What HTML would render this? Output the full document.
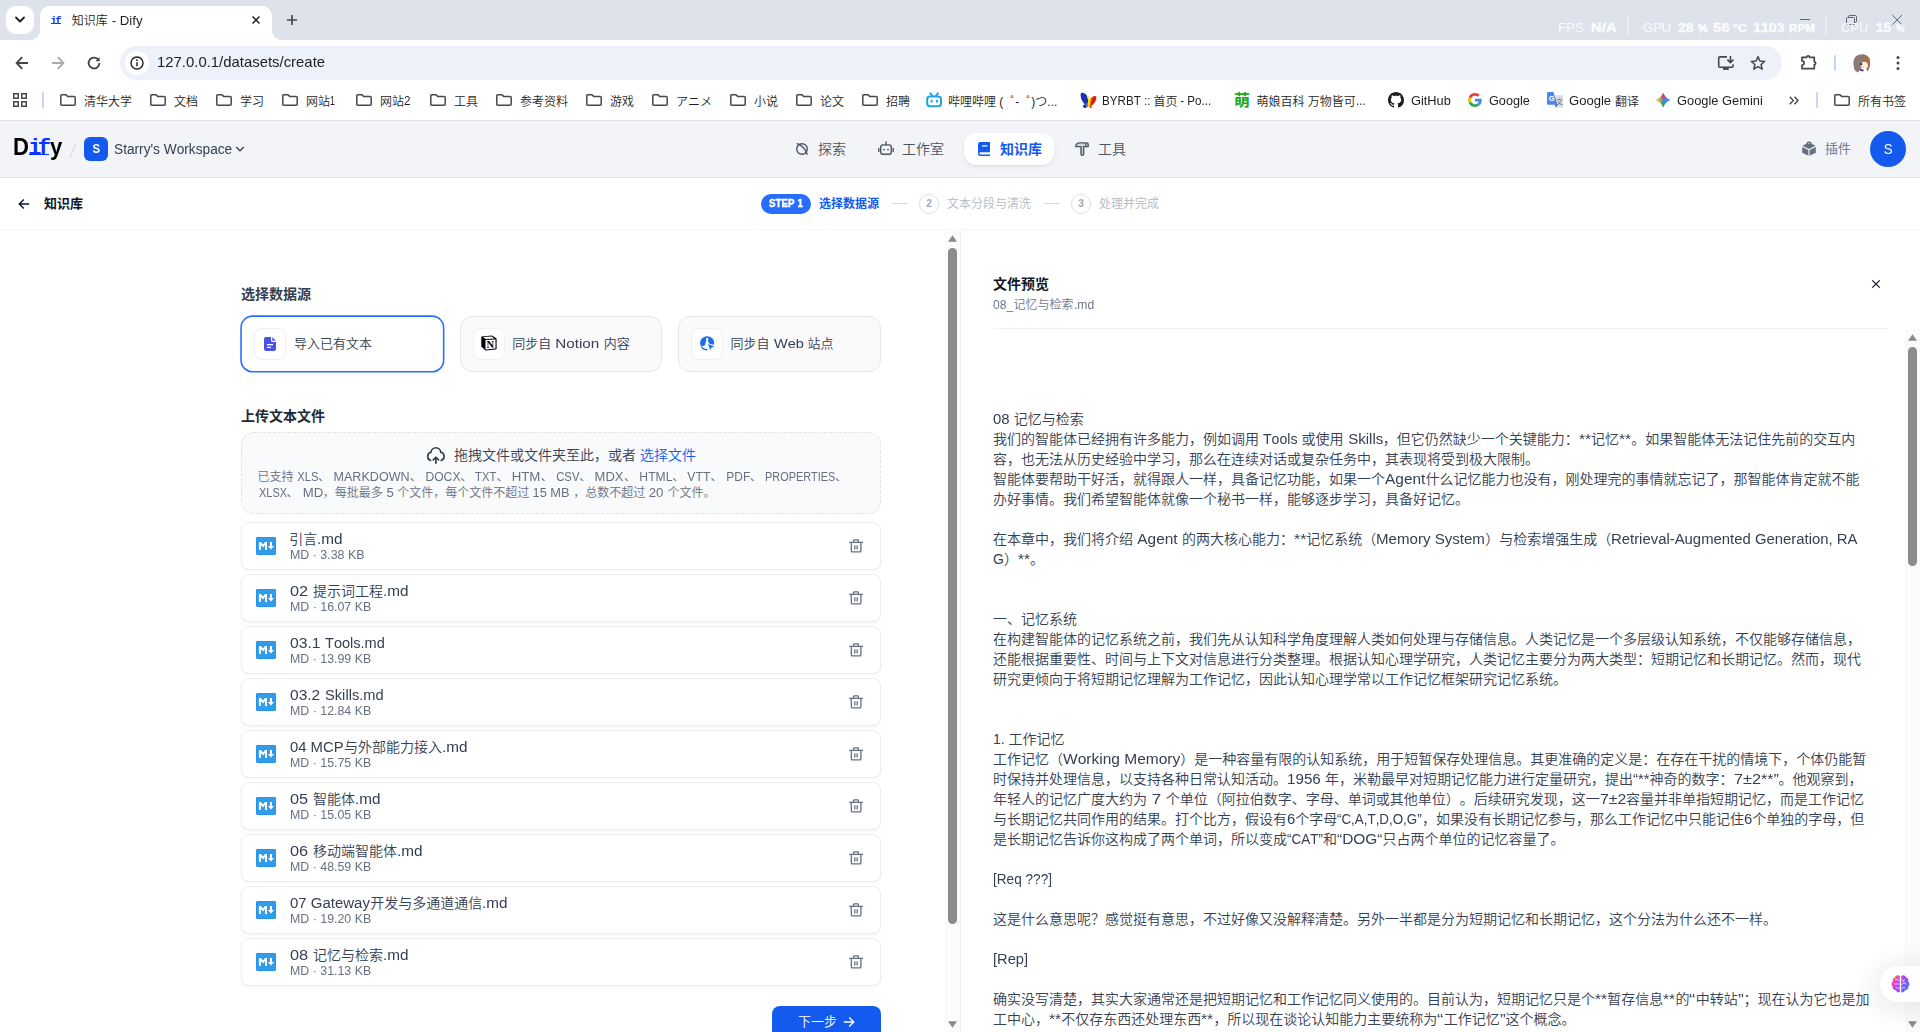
<!DOCTYPE html>
<html lang="zh-CN"><head><meta charset="utf-8"><title>知识库 - Dify</title>
<style>
*{box-sizing:border-box;margin:0;padding:0}
html,body{width:1920px;height:1032px;overflow:hidden;background:#fff}
body{font-family:"Liberation Sans","Noto Sans CJK SC",sans-serif;position:relative;color:#1f1f1f;font-weight:350;text-spacing-trim:space-all;font-kerning:none}
.a{position:absolute;white-space:nowrap}
.t{white-space:pre}
.l{display:inline-block;white-space:pre}
.l>span{display:inline-block;white-space:pre;transform-origin:0 50%}
svg{position:absolute;overflow:visible}
#strip{left:0;top:0;width:1920px;height:40px;background:#dee2ea}
#tabbtn{left:6px;top:6px;width:28px;height:28px;border-radius:10px;background:#fff}
#tab{left:40px;top:6px;width:232px;height:34px;border-radius:10px 10px 0 0;background:#fff}
#tabL{left:30px;top:30px;width:10px;height:10px;background:radial-gradient(circle at 0 0,transparent 9.7px,#fff 10.3px)}
#tabR{left:272px;top:30px;width:10px;height:10px;background:radial-gradient(circle at 100% 0,transparent 9.7px,#fff 10.3px)}
#toolbar{left:0;top:40px;width:1920px;height:80px;background:#fff;border-radius:7px 7px 0 0}
#url{left:120px;top:46px;width:1662px;height:34px;border-radius:17px;background:#edf1fa}
#urlic{left:125px;top:51px;width:24px;height:24px;border-radius:12px;background:#fff}
.bk{font-size:12px;color:#1f1f1f}
.bk .l{position:relative;top:-1px}
.hd{display:inline-block;width:12px;position:relative;left:7px}
.ov{font-size:13.5px;color:#fafbfd}
.ovb{font-weight:700;-webkit-text-stroke:.45px #fafbfd}
.ov b{font-weight:700}
.u{font-size:10px;font-weight:700}
#hdr{left:0;top:120px;width:1920px;height:58px;background:#f2f4f8;border-top:1px solid #e1e3e1;border-bottom:1px solid #dfe2e9}
#sub{left:0;top:178px;width:1920px;height:52px;background:#fff;border-bottom:1px solid #f5f6f8}
.nav{font-size:14px;color:#495464}
.pl{font-size:14px;color:#354052;font-weight:350}
.fn{font-size:14px;color:#354052}
.fm{font-size:12px;color:#676f83}
</style></head>
<body>
<div class="a" id="strip"></div>
<div class="a" id="tabbtn"></div>
<svg style="left:14px;top:16px" width="12" height="8" viewBox="0 0 12 8"><path d="M2 1.5 L6 5.5 L10 1.5" fill="none" stroke="#1f1f1f" stroke-width="1.8" stroke-linecap="round" stroke-linejoin="round"/></svg>
<div class="a" id="tab"></div><div class="a" id="tabL"></div><div class="a" id="tabR"></div>
<div class="a" style="left:50.5px;top:14px;font:bold 10.5px/14px 'Liberation Mono',monospace;color:#1433ff;letter-spacing:-1.6px">if</div>
<div class="a" style="left:51px;top:23.2px;width:9.6px;height:1.1px;background:#1433ff"></div>
<div class="a t" id="tabt" style="left:71.70px;top:12px;height:18px;line-height:18px;font-size:12px;color:#1f1f1f">知识库<span class="l" style="width:34.64px"><span style="transform:scaleX(1.1053)"> - Dify</span></span></div>
<svg style="left:252px;top:16px" width="8" height="8" viewBox="0 0 8 8"><path d="M0.5 0.5 L7.5 7.5 M7.5 0.5 L0.5 7.5" stroke="#1f1f1f" stroke-width="1.5" fill="none"/></svg>
<svg style="left:286px;top:14px" width="12" height="12" viewBox="0 0 12 12"><path d="M6 1 V11 M1 6 H11" stroke="#474747" stroke-width="1.7" fill="none"/></svg>
<svg style="left:1800px;top:14px" width="110" height="12" viewBox="0 0 110 12"><path d="M0 5.5 H10" stroke="#60646b" stroke-width="1" fill="none"/><rect x="46.5" y="3.5" width="8" height="7" rx="1.2" stroke="#60646b" stroke-width="1" fill="none"/><path d="M48.5 3.2 V2.7 Q48.5 1.5 49.7 1.5 H55.3 Q56.5 1.5 56.5 2.7 V7.3 Q56.5 8.5 55.3 8.5 H54.8" stroke="#60646b" stroke-width="1" fill="none"/><path d="M92.3 1 L102 10.7 M102 1 L92.3 10.7" stroke="#60646b" stroke-width="1" fill="none"/></svg>
<div class="a t ov" id="ov1" style="left:1557.70px;top:18px;height:20px;line-height:20px;"><span class="l" style="width:26.07px"><span style="transform:scaleX(0.9924)">FPS</span></span></div>
<div class="a t ov ovb" id="ov2" style="left:1590.60px;top:18px;height:20px;line-height:20px;"><span class="l" style="width:25.65px"><span style="transform:scaleX(1.1032)">N/A</span></span></div>
<div class="a" style="left:1627.3px;top:15px;width:1.6px;height:20px;background:#eceef3"></div>
<div class="a t ov" id="ov3" style="left:1643.30px;top:18px;height:20px;line-height:20px;"><span class="l" style="width:28.27px"><span style="transform:scaleX(0.9658)">GPU</span></span></div>
<div class="a t ov ovb" id="ov4" style="left:1678.00px;top:18px;height:20px;line-height:20px;"><span class="l" style="width:15.63px"><span style="transform:scaleX(1.0399)">28</span></span></div>
<div class="a t ov u ovb" id="ov4u" style="left:1697.50px;top:19px;height:20px;line-height:20px;"><span class="l" style="width:10.01px"><span style="transform:scaleX(1.1235)">%</span></span></div>
<div class="a t ov ovb" id="ov5" style="left:1712.90px;top:18px;height:20px;line-height:20px;"><span class="l" style="width:16.83px"><span style="transform:scaleX(1.1198)">56</span></span></div>
<div class="a t ov u ovb" id="ov5u" style="left:1732.50px;top:19px;height:20px;line-height:20px;"><span class="l" style="width:13.73px"><span style="transform:scaleX(1.2225)">°C</span></span></div>
<div class="a t ov ovb" id="ov6" style="left:1753.30px;top:18px;height:20px;line-height:20px;"><span class="l" style="width:31.75px"><span style="transform:scaleX(1.0566)">1103</span></span></div>
<div class="a t ov u ovb" id="ov6u" style="left:1789.40px;top:19px;height:20px;line-height:20px;"><span class="l" style="width:25.93px"><span style="transform:scaleX(1.1664)">RPM</span></span></div>
<div class="a" style="left:1825.2px;top:15px;width:1.6px;height:20px;background:#eceef3"></div>
<div class="a t ov" id="ov7" style="left:1841.40px;top:18px;height:20px;line-height:20px;"><span class="l" style="width:27.22px"><span style="transform:scaleX(0.9544)">CPU</span></span></div>
<div class="a t ov ovb" id="ov8" style="left:1876.00px;top:18px;height:20px;line-height:20px;"><span class="l" style="width:14.93px"><span style="transform:scaleX(0.9933)">15</span></span></div>
<div class="a t ov u ovb" id="ov8u" style="left:1896.30px;top:19px;height:20px;line-height:20px;"><span class="l" style="width:8.61px"><span style="transform:scaleX(0.9663)">%</span></span></div>
<div class="a" id="toolbar"></div>
<svg style="left:15px;top:56px" width="14" height="14" viewBox="0 0 14 14"><path d="M13 7 H2 M7.2 1.2 L1.6 7 L7.2 12.8" fill="none" stroke="#434343" stroke-width="1.8" stroke-linejoin="miter"/></svg>
<svg style="left:51px;top:56px" width="14" height="14" viewBox="0 0 14 14"><path d="M1 7 H12 M6.8 1.2 L12.4 7 L6.8 12.8" fill="none" stroke="#ababab" stroke-width="1.8"/></svg>
<svg style="left:87px;top:56px" width="14" height="14" viewBox="0 0 14 14"><path d="M11.6 4.2 A5.4 5.4 0 1 0 12.4 7" fill="none" stroke="#434343" stroke-width="1.8"/><path d="M12.6 1 V5.2 H8.4 Z" fill="#474747"/></svg>
<div class="a" id="url"></div><div class="a" id="urlic"></div>
<svg style="left:130px;top:56px" width="14" height="14" viewBox="0 0 14 14"><circle cx="7" cy="7" r="6" fill="none" stroke="#1f1f1f" stroke-width="1.4"/><path d="M7 6.3 V10.2" stroke="#1f1f1f" stroke-width="1.5"/><circle cx="7" cy="4.2" r="0.9" fill="#1f1f1f"/></svg>
<div class="a t" id="urlt" style="left:157.30px;top:52px;height:20px;line-height:20px;font-size:14.5px;color:#1f1f1f"><span class="l" style="width:168.06px"><span style="transform:scaleX(1.0269)">127.0.0.1/datasets/create</span></span></div>
<svg style="left:1717px;top:55px" width="18" height="16" viewBox="0 0 18 16"><path d="M10 1.9 H3 Q1.7 1.9 1.7 3.2 V11 Q1.7 12.3 3 12.3 H14.8 Q16.1 12.3 16.1 11 V9.2" fill="none" stroke="#474747" stroke-width="1.6"/><path d="M6 13.9 H11.8" stroke="#474747" stroke-width="2"/><path d="M13.4 1 V7.4 M10.4 4.6 L13.4 7.6 L16.4 4.6" fill="none" stroke="#474747" stroke-width="1.6"/></svg>
<svg style="left:1750px;top:55px" width="16" height="16" viewBox="0 0 16 16"><path d="M8 1.6 L9.9 6 L14.7 6.4 L11.1 9.5 L12.2 14.2 L8 11.7 L3.8 14.2 L4.9 9.5 L1.3 6.4 L6.1 6 Z" fill="none" stroke="#474747" stroke-width="1.5" stroke-linejoin="round"/></svg>
<svg style="left:1800px;top:54px" width="18" height="17" viewBox="0 0 18 17"><path d="M2 3.3 H6.7 A1.4 1.4 0 0 1 9.5 3.3 H14.3 V7.8 A1.4 1.4 0 0 1 14.3 10.6 V14.7 H2 V11.1 A2.1 2.1 0 0 0 2 6.9 Z" fill="none" stroke="#474747" stroke-width="1.7" stroke-linejoin="round"/></svg>
<div class="a" style="left:1833.8px;top:55px;width:2.2px;height:16px;background:#c5d7f6;border-radius:1px"></div>
<svg style="left:1852px;top:53px" width="20" height="21" viewBox="0 0 20 21"><defs><filter id="bl" x="-20%" y="-20%" width="140%" height="140%"><feGaussianBlur stdDeviation="0.55"/></filter><clipPath id="cp"><circle cx="10" cy="10.5" r="10"/></clipPath></defs><g clip-path="url(#cp)" filter="url(#bl)"><path d="M2 14 C0 6 4 1 9 1.5 C13 0.5 17 3 18 7 C18.5 11 17.5 15 16 18 L12 14 L8 16 L6 20 C3 19 2 17 2 14Z" fill="#8c7a74"/><path d="M11 4 C15 2 18.5 5 18 9 C18 13 17 16 15.5 18.5 L14 13 C13 9 12 7 11 4Z" fill="#b16a48"/><ellipse cx="12.3" cy="12.6" rx="3.6" ry="3.8" fill="#fcf1d9"/><ellipse cx="9.3" cy="11.2" rx="0.9" ry="1.1" fill="#2a1a1a"/><ellipse cx="10.5" cy="13.8" rx="1.2" ry="0.8" fill="#f5b8b0"/><path d="M8 15.5 L12 17 L11 18.5 L7.5 17.5Z" fill="#4a3a8a"/></g></svg>
<svg style="left:1896px;top:55px" width="4" height="16" viewBox="0 0 4 16"><circle cx="2" cy="2.5" r="1.5" fill="#474747"/><circle cx="2" cy="8" r="1.5" fill="#474747"/><circle cx="2" cy="13.5" r="1.5" fill="#474747"/></svg>
<svg style="left:13px;top:93px" width="14" height="14" viewBox="0 0 14 14"><g fill="none" stroke="#474747" stroke-width="1.5"><rect x="0.75" y="0.75" width="4.5" height="4.5"/><rect x="8.75" y="0.75" width="4.5" height="4.5"/><rect x="0.75" y="8.75" width="4.5" height="4.5"/><rect x="8.75" y="8.75" width="4.5" height="4.5"/></g></svg>
<div class="a" style="left:42px;top:92px;width:2px;height:16px;background:#c5d7f6;border-radius:1px"></div>
<svg style="left:60px;top:94px" width="16" height="12" viewBox="0 0 16 12"><path d="M1.8 0.8 H6 L7.6 2.4 H14.2 Q15.2 2.4 15.2 3.4 V10.2 Q15.2 11.2 14.2 11.2 H1.8 Q0.8 11.2 0.8 10.2 V1.8 Q0.8 0.8 1.8 0.8 Z" fill="none" stroke="#474747" stroke-width="1.5" stroke-linejoin="round"/></svg>
<div class="a t bk" id="bk0" style="left:84.00px;top:93px;height:18px;line-height:18px;">清华大学</div>
<svg style="left:150px;top:94px" width="16" height="12" viewBox="0 0 16 12"><path d="M1.8 0.8 H6 L7.6 2.4 H14.2 Q15.2 2.4 15.2 3.4 V10.2 Q15.2 11.2 14.2 11.2 H1.8 Q0.8 11.2 0.8 10.2 V1.8 Q0.8 0.8 1.8 0.8 Z" fill="none" stroke="#474747" stroke-width="1.5" stroke-linejoin="round"/></svg>
<div class="a t bk" id="bk1" style="left:174.00px;top:93px;height:18px;line-height:18px;">文档</div>
<svg style="left:216px;top:94px" width="16" height="12" viewBox="0 0 16 12"><path d="M1.8 0.8 H6 L7.6 2.4 H14.2 Q15.2 2.4 15.2 3.4 V10.2 Q15.2 11.2 14.2 11.2 H1.8 Q0.8 11.2 0.8 10.2 V1.8 Q0.8 0.8 1.8 0.8 Z" fill="none" stroke="#474747" stroke-width="1.5" stroke-linejoin="round"/></svg>
<div class="a t bk" id="bk2" style="left:240.00px;top:93px;height:18px;line-height:18px;">学习</div>
<svg style="left:282px;top:94px" width="16" height="12" viewBox="0 0 16 12"><path d="M1.8 0.8 H6 L7.6 2.4 H14.2 Q15.2 2.4 15.2 3.4 V10.2 Q15.2 11.2 14.2 11.2 H1.8 Q0.8 11.2 0.8 10.2 V1.8 Q0.8 0.8 1.8 0.8 Z" fill="none" stroke="#474747" stroke-width="1.5" stroke-linejoin="round"/></svg>
<div class="a t bk" id="bk3" style="left:306.00px;top:93px;height:18px;line-height:18px;">网站<span class="l" style="width:4.99px"><span style="transform:scaleX(0.7458)">1</span></span></div>
<svg style="left:356px;top:94px" width="16" height="12" viewBox="0 0 16 12"><path d="M1.8 0.8 H6 L7.6 2.4 H14.2 Q15.2 2.4 15.2 3.4 V10.2 Q15.2 11.2 14.2 11.2 H1.8 Q0.8 11.2 0.8 10.2 V1.8 Q0.8 0.8 1.8 0.8 Z" fill="none" stroke="#474747" stroke-width="1.5" stroke-linejoin="round"/></svg>
<div class="a t bk" id="bk4" style="left:380.00px;top:93px;height:18px;line-height:18px;">网站<span class="l" style="width:6.49px"><span style="transform:scaleX(0.9701)">2</span></span></div>
<svg style="left:430px;top:94px" width="16" height="12" viewBox="0 0 16 12"><path d="M1.8 0.8 H6 L7.6 2.4 H14.2 Q15.2 2.4 15.2 3.4 V10.2 Q15.2 11.2 14.2 11.2 H1.8 Q0.8 11.2 0.8 10.2 V1.8 Q0.8 0.8 1.8 0.8 Z" fill="none" stroke="#474747" stroke-width="1.5" stroke-linejoin="round"/></svg>
<div class="a t bk" id="bk5" style="left:454.00px;top:93px;height:18px;line-height:18px;">工具</div>
<svg style="left:496px;top:94px" width="16" height="12" viewBox="0 0 16 12"><path d="M1.8 0.8 H6 L7.6 2.4 H14.2 Q15.2 2.4 15.2 3.4 V10.2 Q15.2 11.2 14.2 11.2 H1.8 Q0.8 11.2 0.8 10.2 V1.8 Q0.8 0.8 1.8 0.8 Z" fill="none" stroke="#474747" stroke-width="1.5" stroke-linejoin="round"/></svg>
<div class="a t bk" id="bk6" style="left:520.00px;top:93px;height:18px;line-height:18px;">参考资料</div>
<svg style="left:586px;top:94px" width="16" height="12" viewBox="0 0 16 12"><path d="M1.8 0.8 H6 L7.6 2.4 H14.2 Q15.2 2.4 15.2 3.4 V10.2 Q15.2 11.2 14.2 11.2 H1.8 Q0.8 11.2 0.8 10.2 V1.8 Q0.8 0.8 1.8 0.8 Z" fill="none" stroke="#474747" stroke-width="1.5" stroke-linejoin="round"/></svg>
<div class="a t bk" id="bk7" style="left:610.00px;top:93px;height:18px;line-height:18px;">游戏</div>
<svg style="left:652px;top:94px" width="16" height="12" viewBox="0 0 16 12"><path d="M1.8 0.8 H6 L7.6 2.4 H14.2 Q15.2 2.4 15.2 3.4 V10.2 Q15.2 11.2 14.2 11.2 H1.8 Q0.8 11.2 0.8 10.2 V1.8 Q0.8 0.8 1.8 0.8 Z" fill="none" stroke="#474747" stroke-width="1.5" stroke-linejoin="round"/></svg>
<div class="a t bk" id="bk8" style="left:676.00px;top:93px;height:18px;line-height:18px;font-family:'Liberation Sans','Noto Sans CJK JP',sans-serif">アニメ</div>
<svg style="left:730px;top:94px" width="16" height="12" viewBox="0 0 16 12"><path d="M1.8 0.8 H6 L7.6 2.4 H14.2 Q15.2 2.4 15.2 3.4 V10.2 Q15.2 11.2 14.2 11.2 H1.8 Q0.8 11.2 0.8 10.2 V1.8 Q0.8 0.8 1.8 0.8 Z" fill="none" stroke="#474747" stroke-width="1.5" stroke-linejoin="round"/></svg>
<div class="a t bk" id="bk9" style="left:754.00px;top:93px;height:18px;line-height:18px;">小说</div>
<svg style="left:796px;top:94px" width="16" height="12" viewBox="0 0 16 12"><path d="M1.8 0.8 H6 L7.6 2.4 H14.2 Q15.2 2.4 15.2 3.4 V10.2 Q15.2 11.2 14.2 11.2 H1.8 Q0.8 11.2 0.8 10.2 V1.8 Q0.8 0.8 1.8 0.8 Z" fill="none" stroke="#474747" stroke-width="1.5" stroke-linejoin="round"/></svg>
<div class="a t bk" id="bk10" style="left:820.00px;top:93px;height:18px;line-height:18px;">论文</div>
<svg style="left:862px;top:94px" width="16" height="12" viewBox="0 0 16 12"><path d="M1.8 0.8 H6 L7.6 2.4 H14.2 Q15.2 2.4 15.2 3.4 V10.2 Q15.2 11.2 14.2 11.2 H1.8 Q0.8 11.2 0.8 10.2 V1.8 Q0.8 0.8 1.8 0.8 Z" fill="none" stroke="#474747" stroke-width="1.5" stroke-linejoin="round"/></svg>
<div class="a t bk" id="bk11" style="left:886.00px;top:93px;height:18px;line-height:18px;">招聘</div>
<svg style="left:1834px;top:94px" width="16" height="12" viewBox="0 0 16 12"><path d="M1.8 0.8 H6 L7.6 2.4 H14.2 Q15.2 2.4 15.2 3.4 V10.2 Q15.2 11.2 14.2 11.2 H1.8 Q0.8 11.2 0.8 10.2 V1.8 Q0.8 0.8 1.8 0.8 Z" fill="none" stroke="#474747" stroke-width="1.5" stroke-linejoin="round"/></svg>
<div class="a t bk" id="bk12" style="left:1858.00px;top:93px;height:18px;line-height:18px;">所有书签</div>
<svg style="left:926px;top:92px" width="16" height="16" viewBox="0 0 16 16"><rect x="1.2" y="4.6" width="13.8" height="9.6" rx="2.6" fill="none" stroke="#1fa3e2" stroke-width="2"/><path d="M4.4 1.4 L6.4 4 M11.8 1.4 L9.8 4" stroke="#1fa3e2" stroke-width="2" stroke-linecap="round"/><path d="M5.6 7.7 V10.4 M10.9 7.7 V10.4" stroke="#1fa3e2" stroke-width="1.9"/></svg>
<div class="a bk" style="left:948px;top:93px;height:18px;line-height:18px;font-family:'Liberation Sans','Noto Sans CJK SC','Noto Sans CJK JP',sans-serif">哔哩哔哩 (<span class="hd">゜</span>-<span class="hd">゜</span>)つ...</div>
<svg style="left:1079.5px;top:91.5px" width="17" height="17" viewBox="0 0 17 17"><defs><filter id="bf" x="-10%" y="-10%" width="120%" height="120%"><feGaussianBlur stdDeviation="0.3"/></filter><linearGradient id="bw" x1="0" y1="0" x2="1" y2="0"><stop offset="0" stop-color="#ffe600"/><stop offset=".45" stop-color="#f58a10"/><stop offset="1" stop-color="#dd1c10"/></linearGradient></defs><g filter="url(#bf)"><path d="M16.2 4.6 C16.8 6 16 9 14 11.5 C13 12.8 12 13.6 11 14.2 L12 16 L10.8 16.2 L9.8 14.8 L8.6 15.6 C8.4 12.5 9 9 10.5 6.8 C12 4.6 15.3 3.2 16.2 4.6Z" fill="#dd1c10"/><path d="M8.6 15.6 C8.4 12.5 9 9 10.5 6.8 C11.4 5.6 12.8 4.6 14 4.2 C12.6 6 11.2 9 10.6 12 C10.4 13.2 10 14.4 9.8 14.8Z" fill="url(#bw)"/><path d="M1.5 1 C4 0.2 7 2.5 7.8 6 C8.3 8.5 8.2 11 8 13.5 C7.6 15.5 5 16.5 3.5 15.5 C2.3 14.5 3.2 12.8 4.8 12.2 C2.5 10 0.6 6.5 0.6 3.5 C0.6 2.2 0.9 1.3 1.5 1Z" fill="#1a30b2"/><path d="M8 3.6 L9.2 6.2 C9.7 8 9.6 10 9 12.5 L8.3 15.4 L8 13.5 C8.2 11 8.3 8.5 7.8 6.4 L6.8 5.6Z" fill="#ffe600"/><path d="M6.6 11 L7.6 10.6 L7.4 14 L6.2 14.4Z" fill="#aab4ee"/></g></svg>
<div class="a t bk" id="bkc" style="left:1101.80px;top:93px;height:18px;line-height:18px;"><span class="l" style="width:51.66px"><span style="transform:scaleX(0.9684)">BYRBT :: </span></span>首页<span class="l" style="width:34.23px"><span style="transform:scaleX(0.9684)"> - Po...</span></span></div>
<div class="a t" id="bkm0" style="left:1234.00px;top:91px;height:20px;line-height:20px;font-size:16px;font-weight:700;color:#22a81c">萌</div>
<div class="a t bk" id="bkd" style="left:1256.50px;top:93px;height:18px;line-height:18px;">萌娘百科<span class="l" style="width:3.22px"><span style="transform:scaleX(0.9626)"> </span></span>万物皆可<span class="l" style="width:9.64px"><span style="transform:scaleX(0.9626)">...</span></span></div>
<svg style="left:1388px;top:92px" width="16" height="16" viewBox="0 0 16 16"><path fill="#1f1f1f" d="M8 0C3.58 0 0 3.58 0 8c0 3.54 2.29 6.53 5.47 7.59.4.07.55-.17.55-.38 0-.19-.01-.82-.01-1.49-2.01.37-2.53-.49-2.69-.94-.09-.23-.48-.94-.82-1.13-.28-.15-.68-.52-.01-.53.63-.01 1.08.58 1.23.82.72 1.21 1.87.87 2.33.66.07-.52.28-.87.51-1.07-1.78-.2-3.64-.89-3.64-3.95 0-.87.31-1.59.82-2.15-.08-.2-.36-1.02.08-2.12 0 0 .67-.21 2.2.82.64-.18 1.32-.27 2-.27s1.36.09 2 .27c1.53-1.04 2.2-.82 2.2-.82.44 1.1.16 1.92.08 2.12.51.56.82 1.27.82 2.15 0 3.07-1.87 3.75-3.65 3.95.29.25.54.73.54 1.48 0 1.07-.01 1.93-.01 2.2 0 .21.15.46.55.38A8.01 8.01 0 0 0 16 8c0-4.42-3.58-8-8-8z"/></svg>
<div class="a t bk" id="bke" style="left:1410.50px;top:93px;height:18px;line-height:18px;"><span class="l" style="width:39.86px"><span style="transform:scaleX(1.0669)">GitHub</span></span></div>
<svg style="left:1468px;top:93px" width="14" height="14" viewBox="0 0 48 48"><path fill="#EA4335" d="M24 9.5c3.54 0 6.71 1.22 9.21 3.6l6.85-6.85C35.9 2.38 30.47 0 24 0 14.62 0 6.51 5.38 2.56 13.22l7.98 6.19C12.43 13.72 17.74 9.5 24 9.5z"/><path fill="#4285F4" d="M46.98 24.55c0-1.57-.15-3.09-.38-4.55H24v9.02h12.94c-.58 2.96-2.26 5.48-4.78 7.18l7.73 6c4.51-4.18 7.09-10.36 7.09-17.65z"/><path fill="#FBBC05" d="M10.53 28.59c-.48-1.45-.76-2.99-.76-4.59s.27-3.14.76-4.59l-7.98-6.19C.92 16.46 0 20.12 0 24c0 3.88.92 7.54 2.56 10.78l7.97-6.19z"/><path fill="#34A853" d="M24 48c6.48 0 11.93-2.13 15.89-5.81l-7.73-6c-2.15 1.45-4.92 2.3-8.16 2.3-6.26 0-11.57-4.22-13.47-9.91l-7.98 6.19C6.51 42.62 14.62 48 24 48z"/></svg>
<div class="a t bk" id="bkf" style="left:1489.30px;top:93px;height:18px;line-height:18px;"><span class="l" style="width:40.90px"><span style="transform:scaleX(1.0568)">Google</span></span></div>
<svg style="left:1547px;top:92px" width="16" height="16" viewBox="0 0 16 16"><rect x="8.2" y="3.3" width="7.8" height="12.2" rx="1" fill="#dbdde1"/><path d="M7.4 12.6 H10.6 L9 15.4Z" fill="#3367d6"/><path d="M1.2 0 H6.4 L10.6 12.8 H1.2 Q0 12.8 0 11.6 V1.2 Q0 0 1.2 0Z" fill="#4a86f0"/><text x="4.6" y="9" font-size="7.5" font-weight="700" text-anchor="middle" fill="#fff" font-family="Liberation Sans,sans-serif">G</text><text x="12.6" y="11.8" font-size="6.5" text-anchor="middle" fill="#5f6368" font-family="Noto Sans CJK SC,sans-serif">文</text></svg>
<div class="a t bk" id="bkg" style="left:1569.30px;top:93px;height:18px;line-height:18px;"><span class="l" style="width:45.73px"><span style="transform:scaleX(1.0880)">Google </span></span>翻译</div>
<svg style="left:1656px;top:93px" width="14.4" height="14.2" viewBox="0 0 16 16"><defs><radialGradient id="g1" gradientUnits="userSpaceOnUse" cx="8" cy="0" r="8"><stop offset="0.4" stop-color="#ea4335"/><stop offset="1" stop-color="#ea4335" stop-opacity="0"/></radialGradient><radialGradient id="g2" gradientUnits="userSpaceOnUse" cx="0" cy="8" r="8"><stop offset="0.4" stop-color="#fbbc05"/><stop offset="1" stop-color="#fbbc05" stop-opacity="0"/></radialGradient><radialGradient id="g3" gradientUnits="userSpaceOnUse" cx="8" cy="16" r="8"><stop offset="0.4" stop-color="#34a853"/><stop offset="1" stop-color="#34a853" stop-opacity="0"/></radialGradient></defs><path d="M8 0 Q10.4 5.6 16 8 Q10.4 10.4 8 16 Q5.6 10.4 0 8 Q5.6 5.6 8 0Z" fill="#4285f4"/><path d="M8 0 Q10.4 5.6 16 8 Q10.4 10.4 8 16 Q5.6 10.4 0 8 Q5.6 5.6 8 0Z" fill="url(#g1)"/><path d="M8 0 Q10.4 5.6 16 8 Q10.4 10.4 8 16 Q5.6 10.4 0 8 Q5.6 5.6 8 0Z" fill="url(#g3)"/><path d="M8 0 Q10.4 5.6 16 8 Q10.4 10.4 8 16 Q5.6 10.4 0 8 Q5.6 5.6 8 0Z" fill="url(#g2)"/></svg>
<div class="a t bk" id="bkh" style="left:1677.30px;top:93px;height:18px;line-height:18px;"><span class="l" style="width:85.75px"><span style="transform:scaleX(1.0712)">Google Gemini</span></span></div>
<svg style="left:1789px;top:96px" width="10" height="9" viewBox="0 0 10 9"><path d="M0.8 0.8 L4.3 4.5 L0.8 8.2 M5.5 0.8 L9 4.5 L5.5 8.2" fill="none" stroke="#474747" stroke-width="1.4"/></svg>
<div class="a" style="left:1816px;top:92px;width:2px;height:16px;background:#c5d7f6;border-radius:1px"></div>
<div class="a" id="hdr"></div>
<div class="a" style="left:13px;top:131px;height:32px;line-height:32px;font-size:24px;font-weight:700;color:#000;transform:scaleX(.92);transform-origin:0 50%">D</div>
<div class="a" style="left:28.2px;top:132.5px;height:32px;line-height:32px;font-size:22px;font-weight:700;color:#0a33ff;font-family:'Liberation Mono',monospace;letter-spacing:-3.6px">if</div>
<div class="a" style="left:29.2px;top:153.5px;width:19.6px;height:1.7px;background:#0a33ff"></div>
<div class="a" style="left:50.2px;top:131px;height:32px;line-height:32px;font-size:24px;font-weight:700;color:#000;transform:scaleX(.92);transform-origin:0 50%">y</div>
<svg style="left:69px;top:143px" width="8" height="15" viewBox="0 0 8 15"><path d="M6.8 0.5 L1.2 14.5" stroke="#d9dce3" stroke-width="1.2" fill="none"/></svg>
<div class="a" style="left:84px;top:137px;width:24px;height:24px;border-radius:6px;background:#155aef;color:#fff;font-size:13px;font-weight:700;line-height:24px;text-align:center"><span style="display:inline-block;transform:scaleX(.88)">S</span></div>
<div class="a t" id="ws" style="left:113.70px;top:139px;height:20px;line-height:20px;font-size:14px;color:#354052"><span class="l" style="width:118.22px"><span style="transform:scaleX(0.9777)">Starry&#x27;s Workspace</span></span></div>
<svg style="left:235px;top:146px" width="10" height="6" viewBox="0 0 10 6"><path d="M1.3 1 L5 4.7 L8.7 1" fill="none" stroke="#354052" stroke-width="1.4"/></svg>
<svg style="left:795px;top:142px" width="14" height="14" viewBox="0 0 14 14"><circle cx="7" cy="7" r="5.3" fill="none" stroke="#495464" stroke-width="1.4"/><path d="M2.2 1.8 C5.5 2.2 11.5 8 12 12.2" fill="none" stroke="#495464" stroke-width="1.4" stroke-linecap="round"/></svg>
<div class="a t nav" id="nv1" style="left:818.00px;top:139px;height:20px;line-height:20px;">探索</div>
<svg style="left:878px;top:141px" width="16" height="15" viewBox="0 0 16 15"><rect x="2.7" y="3.9" width="10.6" height="9.4" rx="2.4" fill="none" stroke="#495464" stroke-width="1.4"/><path d="M8 1 V4" stroke="#495464" stroke-width="1.4" stroke-linecap="round"/><path d="M0.8 7.5 V10.5 M15.2 7.5 V10.5" stroke="#495464" stroke-width="1.4" stroke-linecap="round"/><circle cx="6" cy="8.6" r="0.9" fill="#495464"/><circle cx="10" cy="8.6" r="0.9" fill="#495464"/></svg>
<div class="a t nav" id="nv2" style="left:902.00px;top:139px;height:20px;line-height:20px;">工作室</div>
<div class="a" style="left:964px;top:133px;width:90px;height:32px;border-radius:12px;background:#fff;box-shadow:0 2px 5px rgba(16,24,40,.06),0 1px 2px rgba(16,24,40,.04)"></div>
<svg style="left:978px;top:142px" width="12" height="14" viewBox="0 0 12 14"><path d="M2.2 0 H12 V10.2 H2.4 A1 1 0 0 0 2.4 12.4 H12 V14 H2.2 A2.2 2.2 0 0 1 0 11.8 V2.2 A2.2 2.2 0 0 1 2.2 0 Z M4 3.2 V4.6 H9.4 V3.2 Z" fill="#155aef" fill-rule="evenodd"/></svg>
<div class="a t nav" id="nv3" style="left:1000.00px;top:139px;height:20px;line-height:20px;color:#155aef;font-weight:700">知识库</div>
<svg style="left:1075px;top:142px" width="14" height="14" viewBox="0 0 14 14"><path d="M0.7 4.6 C1 2 2.5 0.9 5 0.9 H11.5 C12.6 0.9 13.2 1.6 13.2 2.6 V4.6 H8.6 V12 C8.6 12.8 8 13.3 7.3 13.3 C6.5 13.3 6 12.8 6 12 V4.6 Z" fill="#d3d7de" stroke="#495464" stroke-width="1.4" stroke-linejoin="round"/><path d="M10.8 1 V4.4" stroke="#495464" stroke-width="1.2"/></svg>
<div class="a t nav" id="nv4" style="left:1098.00px;top:139px;height:20px;line-height:20px;">工具</div>
<svg style="left:1802px;top:141px" width="14" height="15" viewBox="0 0 14 15"><path d="M7 0.2 L9.6 1.5 V2.7 L13.6 4.7 L7 8 L0.4 4.7 L4.4 2.7 V1.5 Z" fill="#676f83"/><path d="M7 2 L8 2.5 L7 3 L6 2.5Z" fill="#f2f4f7"/><path d="M0.2 5.9 L6.4 9 V14.8 L0.2 11.7Z M13.8 5.9 L7.6 9 V14.8 L13.8 11.7Z" fill="#676f83"/></svg>
<div class="a t" id="plg" style="left:1825.00px;top:139px;height:20px;line-height:20px;font-size:13px;color:#676f83">插件</div>
<div class="a" style="left:1870px;top:131px;width:36px;height:36px;border-radius:18px;background:#155aef;color:#fff;font-size:15.5px;line-height:36px;text-align:center"><span style="display:inline-block;transform:scaleX(.86)">S</span></div>
<div class="a" id="sub"></div>
<svg style="left:18px;top:198px" width="12" height="12" viewBox="0 0 12 12"><path d="M11.2 6 H1.5 M5.8 1.5 L1.3 6 L5.8 10.5" fill="none" stroke="#101828" stroke-width="1.4"/></svg>
<div class="a t" id="kb" style="left:44.00px;top:194px;height:20px;line-height:20px;font-size:13px;font-weight:700;color:#101828">知识库</div>
<div class="a" style="left:761px;top:194px;width:50px;height:20px;border-radius:10px;background:#296dff"></div>
<div class="a t" id="step" style="left:769.00px;top:193px;height:20px;line-height:20px;font-size:10.5px;font-weight:700;color:#fff;-webkit-text-stroke:.35px #fff"><span class="l" style="width:33.89px"><span style="transform:scaleX(0.9364)">STEP 1</span></span></div>
<div class="a t" id="st1" style="left:819.00px;top:194px;height:20px;line-height:20px;font-size:12px;font-weight:700;color:#155aef">选择数据源</div>
<div class="a" style="left:891px;top:203px;width:16px;height:1px;background:#d9dbe0"></div>
<div class="a" style="left:919px;top:194px;width:20px;height:20px;border-radius:10px;border:1px solid #dde0e6;color:#a0a7b5;font-size:10px;font-weight:700;line-height:18px;text-align:center">2</div>
<div class="a t" id="st2" style="left:947.00px;top:194px;height:20px;line-height:20px;font-size:12px;color:#b3b8c2">文本分段与清洗</div>
<div class="a" style="left:1043px;top:203px;width:16px;height:1px;background:#d9dbe0"></div>
<div class="a" style="left:1071px;top:194px;width:20px;height:20px;border-radius:10px;border:1px solid #dde0e6;color:#a0a7b5;font-size:10px;font-weight:700;line-height:18px;text-align:center">3</div>
<div class="a t" id="st3" style="left:1099.00px;top:194px;height:20px;line-height:20px;font-size:12px;color:#b3b8c2">处理并完成</div>
<div class="a" style="left:945px;top:230px;width:15px;height:802px;background:#fbfbfb"></div>
<div class="a" style="left:960px;top:230px;width:1px;height:802px;background:#eff0f2"></div>
<svg style="left:948px;top:235px" width="9" height="7" viewBox="0 0 9 7"><path d="M4.5 0.3 L8.7 6.2 Q8.8 6.8 8 6.8 H1 Q0.2 6.8 0.3 6.2Z" fill="#8b8b8b"/></svg>
<div class="a" style="left:948px;top:248px;width:9px;height:676px;border-radius:4.5px;background:#8b8b8b"></div>
<svg style="left:948px;top:1021px" width="9" height="7" viewBox="0 0 9 7"><path d="M4.5 6.7 L8.7 0.8 Q8.8 0.2 8 0.2 H1 Q0.2 0.2 0.3 0.8Z" fill="#8b8b8b"/></svg>
<div class="a t" id="h1" style="left:241.00px;top:284px;height:20px;line-height:20px;font-size:14px;font-weight:700;color:#354052">选择数据源</div>
<svg style="left:239px;top:314px" width="208" height="61" viewBox="0 0 208 61"><rect x="2.05" y="2.15" width="202.6" height="55.6" rx="11.5" fill="#fff" stroke="#2970ff" stroke-width="1.6"/></svg>
<div class="a" style="left:460px;top:316px;width:202px;height:56px;border-radius:12px;background:#fafafb;border:1px solid #e6e8ee"></div>
<div class="a" style="left:678px;top:316px;width:203px;height:56px;border-radius:12px;background:#fafafb;border:1px solid #e6e8ee"></div>
<div class="a" style="left:254px;top:328px;width:32px;height:32px;border-radius:8px;background:#fff;border:1px solid #eef0f3"></div>
<div class="a" style="left:473px;top:328px;width:32px;height:32px;border-radius:8px;background:#fff;border:1px solid #eef0f3"></div>
<div class="a" style="left:691px;top:328px;width:32px;height:32px;border-radius:8px;background:#fff;border:1px solid #eef0f3"></div>
<svg style="left:264px;top:337px" width="12" height="14" viewBox="0 0 12 14"><path d="M2 0 H7 V3.6 Q7 5 8.4 5 H12 V12 Q12 14 10 14 H2 Q0 14 0 12 V2 Q0 0 2 0 Z M8.2 0.2 L11.8 3.8 H8.8 Q8.2 3.8 8.2 3.2Z" fill="#4a53e6"/><path d="M3 7.6 H9 M3 10.4 H7" stroke="#fff" stroke-width="1.3"/></svg>
<div class="a t" id="c1" style="left:294.00px;top:334px;height:20px;line-height:20px;font-size:13px;color:#354052">导入已有文本</div>
<svg style="left:480.8px;top:335.4px" width="16" height="16" viewBox="0 0 16 16"><path d="M0.3 1.4 L11 0.5 L15.6 3.6 V13.4 L14.8 14.6 L4.4 15.6 L0.3 11.4 Z" fill="#000"/><path d="M2.1 2 L10.6 1.4 L13.4 3.4 L4.7 4 Z" fill="#fff"/><path d="M4.5 5.1 L14.5 4.5 V13.5 L4.5 14.4 Z" fill="#fff"/><text x="9.4" y="13.1" font-size="10.5" font-weight="700" text-anchor="middle" font-family="Liberation Serif,serif" fill="#000">N</text></svg>
<div class="a t" id="c2" style="left:512.30px;top:334px;height:20px;line-height:20px;font-size:13px;color:#354052">同步自<span class="l" style="width:52.51px"><span style="transform:scaleX(1.1718)"> Notion </span></span>内容</div>
<svg style="left:700px;top:336.2px" width="15" height="15" viewBox="0 0 15 15"><circle cx="7.15" cy="7.2" r="7" fill="#1a6df0"/><path d="M7.5 7.6 L15 8.9 V15 H7.5 Z" fill="#fff"/><path d="M6 1.9 L8.2 2 C8.5 3.4 8 4.6 8 5.4 C8.2 6.2 9 6.9 9.8 7.3 L8 8.2 L7.7 13.6 C5.4 13.4 3.4 12.4 2.1 10.9 L1.4 9.7 C2.8 10.3 4.2 10 5 9 C5.6 8.2 5.2 7.4 5.6 6.4 C6 5.4 6.4 4.6 6.3 3.8 C6.2 3 6 2.5 6 1.9Z" fill="#fff"/><path d="M1.6 11.2 A6.4 6.4 0 0 0 7.3 13.65" fill="none" stroke="#1a6df0" stroke-width="1.25"/><path d="M7.9 8.1 L14.3 10.4 L11.5 11.5 L10.3 14.1Z" fill="#1a6df0"/></svg>
<div class="a t" id="c3" style="left:730.50px;top:334px;height:20px;line-height:20px;font-size:13px;color:#354052">同步自<span class="l" style="width:37.97px"><span style="transform:scaleX(1.1178)"> Web </span></span>站点</div>
<div class="a t" id="h2" style="left:241.00px;top:406px;height:20px;line-height:20px;font-size:14px;font-weight:700;color:#1d2939">上传文本文件</div>
<div class="a" style="left:241px;top:432px;width:640px;height:82px;border-radius:12px;background:#f9fafb;border:1px dashed #dfe2e8"></div>
<svg style="left:426px;top:445.5px" width="20" height="19" viewBox="0 0 20 19"><path d="M4.6 14.4 A4.2 4.2 0 0 1 5 6.3 A4.92 4.92 0 0 1 14.8 6.3 A4.2 4.2 0 0 1 15.2 14.4" fill="none" stroke="#2f3a4c" stroke-width="1.6" stroke-linecap="round"/><path d="M9.9 17.3 V11.4 M7.2 13.9 L9.9 11.2 L12.6 13.9" fill="none" stroke="#2f3a4c" stroke-width="1.6" stroke-linecap="round" stroke-linejoin="round"/></svg>
<div class="a t" id="up1" style="left:454.00px;top:445px;height:20px;line-height:20px;font-size:14px;color:#354052">拖拽文件或文件夹至此，或者<span class="l"> </span></div>
<div class="a t" id="up1b" style="left:640.00px;top:445px;height:20px;line-height:20px;font-size:14px;color:#155aef">选择文件</div>
<div class="a t" id="up2" style="left:257.50px;top:469px;height:16px;line-height:16px;font-size:12px;color:#676f83">已支持<span class="l" style="width:24.60px"><span style="transform:scaleX(0.9456)"> XLS</span></span>、<span class="l" style="width:79.60px"><span style="transform:scaleX(1.0474)"> MARKDOWN</span></span>、<span class="l" style="width:38.50px"><span style="transform:scaleX(1.0127)"> DOCX</span></span>、<span class="l" style="width:24.20px"><span style="transform:scaleX(0.9308)"> TXT</span></span>、<span class="l" style="width:32.40px"><span style="transform:scaleX(1.1047)"> HTM</span></span>、<span class="l" style="width:26.50px"><span style="transform:scaleX(0.9459)"> CSV</span></span>、<span class="l" style="width:32.50px"><span style="transform:scaleX(1.0833)"> MDX</span></span>、<span class="l" style="width:36.40px"><span style="transform:scaleX(1.0111)"> HTML</span></span>、<span class="l" style="width:26.30px"><span style="transform:scaleX(1.0115)"> VTT</span></span>、<span class="l" style="width:27.20px"><span style="transform:scaleX(0.9947)"> PDF</span></span>、<span class="l" style="width:73.30px"><span style="transform:scaleX(0.9084)"> PROPERTIES</span></span>、</div>
<div class="a t" id="up3" style="left:258.50px;top:485px;height:16px;line-height:16px;font-size:12px;color:#676f83"><span class="l" style="width:28.10px"><span style="transform:scaleX(0.9157)">XLSX</span></span>、<span class="l" style="width:24.20px"><span style="transform:scaleX(1.1000)"> MD</span></span>，每批最多<span class="l" style="width:14.50px"><span style="transform:scaleX(1.0867)"> 5 </span></span>个文件，每个文件不超过<span class="l" style="width:44.00px"><span style="transform:scaleX(1.0638)"> 15 MB </span></span>，总数不超过<span class="l" style="width:22.20px"><span style="transform:scaleX(1.1091)"> 20 </span></span>个文件。</div>
<div class="a" style="left:241px;top:522px;width:640px;height:48px;border-radius:8px;background:#fff;border:1px solid #eceef2;box-shadow:0 1px 2px rgba(16,24,40,.05)"></div>
<svg style="left:256px;top:537px" width="20" height="18" viewBox="0 0 20 18"><rect width="20" height="18" rx="1.4" fill="#2290ea"/><rect x=".7" y=".7" width="18.6" height="16.6" rx="1" fill="#319bec"/><path d="M2.9 13 V4.9 H4.9 L6.95 7.6 L9 4.9 H11 V13 H9 V8 L6.95 10.6 L4.9 8 V13 Z M14 4.9 H15.9 V9 H18 L14.95 12.5 L11.9 9 H14 Z" fill="#fff"/></svg>
<div class="a t fn" id="fn0" style="left:289.30px;top:529px;height:20px;line-height:20px;">引言<span class="l" style="width:25.50px"><span style="transform:scaleX(1.0924)">.md</span></span></div>
<div class="a t fm" id="fm0" style="left:289.50px;top:547px;height:16px;line-height:16px;"><span class="l" style="width:74.53px"><span style="transform:scaleX(1.0347)">MD · 3.38 KB</span></span></div>
<svg style="left:849px;top:539px" width="14" height="14" viewBox="0 0 14 14"><path d="M0.2 3.4 H14 M2.3 3.4 V11.9 Q2.3 12.9 3.3 12.9 H10.9 Q11.9 12.9 11.9 11.9 V3.4 M4.6 3.2 V1.6 Q4.6 0.8 5.4 0.8 H8.6 Q9.4 0.8 9.4 1.6 V3.2 M5.8 6.2 V10.4 M8.2 6.2 V10.4" fill="none" stroke="#676f83" stroke-width="1.3"/></svg>
<div class="a" style="left:241px;top:574px;width:640px;height:48px;border-radius:8px;background:#fff;border:1px solid #eceef2;box-shadow:0 1px 2px rgba(16,24,40,.05)"></div>
<svg style="left:256px;top:589px" width="20" height="18" viewBox="0 0 20 18"><rect width="20" height="18" rx="1.4" fill="#2290ea"/><rect x=".7" y=".7" width="18.6" height="16.6" rx="1" fill="#319bec"/><path d="M2.9 13 V4.9 H4.9 L6.95 7.6 L9 4.9 H11 V13 H9 V8 L6.95 10.6 L4.9 8 V13 Z M14 4.9 H15.9 V9 H18 L14.95 12.5 L11.9 9 H14 Z" fill="#fff"/></svg>
<div class="a t fn" id="fn1" style="left:290.30px;top:581px;height:20px;line-height:20px;"><span class="l" style="width:22.70px"><span style="transform:scaleX(1.1660)">02 </span></span>提示词工程<span class="l" style="width:25.50px"><span style="transform:scaleX(1.0924)">.md</span></span></div>
<div class="a t fm" id="fm1" style="left:289.50px;top:599px;height:16px;line-height:16px;"><span class="l" style="width:81.20px"><span style="transform:scaleX(1.0318)">MD · 16.07 KB</span></span></div>
<svg style="left:849px;top:591px" width="14" height="14" viewBox="0 0 14 14"><path d="M0.2 3.4 H14 M2.3 3.4 V11.9 Q2.3 12.9 3.3 12.9 H10.9 Q11.9 12.9 11.9 11.9 V3.4 M4.6 3.2 V1.6 Q4.6 0.8 5.4 0.8 H8.6 Q9.4 0.8 9.4 1.6 V3.2 M5.8 6.2 V10.4 M8.2 6.2 V10.4" fill="none" stroke="#676f83" stroke-width="1.3"/></svg>
<div class="a" style="left:241px;top:626px;width:640px;height:48px;border-radius:8px;background:#fff;border:1px solid #eceef2;box-shadow:0 1px 2px rgba(16,24,40,.05)"></div>
<svg style="left:256px;top:641px" width="20" height="18" viewBox="0 0 20 18"><rect width="20" height="18" rx="1.4" fill="#2290ea"/><rect x=".7" y=".7" width="18.6" height="16.6" rx="1" fill="#319bec"/><path d="M2.9 13 V4.9 H4.9 L6.95 7.6 L9 4.9 H11 V13 H9 V8 L6.95 10.6 L4.9 8 V13 Z M14 4.9 H15.9 V9 H18 L14.95 12.5 L11.9 9 H14 Z" fill="#fff"/></svg>
<div class="a t fn" id="fn2" style="left:290.30px;top:633px;height:20px;line-height:20px;"><span class="l" style="width:35.00px"><span style="transform:scaleX(1.1239)">03.1 </span></span><span class="l" style="width:59.80px"><span style="transform:scaleX(1.0386)">Tools.md</span></span></div>
<div class="a t fm" id="fm2" style="left:289.50px;top:651px;height:16px;line-height:16px;"><span class="l" style="width:81.20px"><span style="transform:scaleX(1.0318)">MD · 13.99 KB</span></span></div>
<svg style="left:849px;top:643px" width="14" height="14" viewBox="0 0 14 14"><path d="M0.2 3.4 H14 M2.3 3.4 V11.9 Q2.3 12.9 3.3 12.9 H10.9 Q11.9 12.9 11.9 11.9 V3.4 M4.6 3.2 V1.6 Q4.6 0.8 5.4 0.8 H8.6 Q9.4 0.8 9.4 1.6 V3.2 M5.8 6.2 V10.4 M8.2 6.2 V10.4" fill="none" stroke="#676f83" stroke-width="1.3"/></svg>
<div class="a" style="left:241px;top:678px;width:640px;height:48px;border-radius:8px;background:#fff;border:1px solid #eceef2;box-shadow:0 1px 2px rgba(16,24,40,.05)"></div>
<svg style="left:256px;top:693px" width="20" height="18" viewBox="0 0 20 18"><rect width="20" height="18" rx="1.4" fill="#2290ea"/><rect x=".7" y=".7" width="18.6" height="16.6" rx="1" fill="#319bec"/><path d="M2.9 13 V4.9 H4.9 L6.95 7.6 L9 4.9 H11 V13 H9 V8 L6.95 10.6 L4.9 8 V13 Z M14 4.9 H15.9 V9 H18 L14.95 12.5 L11.9 9 H14 Z" fill="#fff"/></svg>
<div class="a t fn" id="fn3" style="left:290.30px;top:685px;height:20px;line-height:20px;"><span class="l" style="width:34.50px"><span style="transform:scaleX(1.1079)">03.2 </span></span><span class="l" style="width:58.70px"><span style="transform:scaleX(1.0479)">Skills.md</span></span></div>
<div class="a t fm" id="fm3" style="left:289.50px;top:703px;height:16px;line-height:16px;"><span class="l" style="width:81.20px"><span style="transform:scaleX(1.0318)">MD · 12.84 KB</span></span></div>
<svg style="left:849px;top:695px" width="14" height="14" viewBox="0 0 14 14"><path d="M0.2 3.4 H14 M2.3 3.4 V11.9 Q2.3 12.9 3.3 12.9 H10.9 Q11.9 12.9 11.9 11.9 V3.4 M4.6 3.2 V1.6 Q4.6 0.8 5.4 0.8 H8.6 Q9.4 0.8 9.4 1.6 V3.2 M5.8 6.2 V10.4 M8.2 6.2 V10.4" fill="none" stroke="#676f83" stroke-width="1.3"/></svg>
<div class="a" style="left:241px;top:730px;width:640px;height:48px;border-radius:8px;background:#fff;border:1px solid #eceef2;box-shadow:0 1px 2px rgba(16,24,40,.05)"></div>
<svg style="left:256px;top:745px" width="20" height="18" viewBox="0 0 20 18"><rect width="20" height="18" rx="1.4" fill="#2290ea"/><rect x=".7" y=".7" width="18.6" height="16.6" rx="1" fill="#319bec"/><path d="M2.9 13 V4.9 H4.9 L6.95 7.6 L9 4.9 H11 V13 H9 V8 L6.95 10.6 L4.9 8 V13 Z M14 4.9 H15.9 V9 H18 L14.95 12.5 L11.9 9 H14 Z" fill="#fff"/></svg>
<div class="a t fn" id="fn4" style="left:290.30px;top:737px;height:20px;line-height:20px;"><span class="l" style="width:53.60px"><span style="transform:scaleX(1.0597)">04 MCP</span></span>与外部能力接入<span class="l" style="width:25.50px"><span style="transform:scaleX(1.0924)">.md</span></span></div>
<div class="a t fm" id="fm4" style="left:289.50px;top:755px;height:16px;line-height:16px;"><span class="l" style="width:81.20px"><span style="transform:scaleX(1.0318)">MD · 15.75 KB</span></span></div>
<svg style="left:849px;top:747px" width="14" height="14" viewBox="0 0 14 14"><path d="M0.2 3.4 H14 M2.3 3.4 V11.9 Q2.3 12.9 3.3 12.9 H10.9 Q11.9 12.9 11.9 11.9 V3.4 M4.6 3.2 V1.6 Q4.6 0.8 5.4 0.8 H8.6 Q9.4 0.8 9.4 1.6 V3.2 M5.8 6.2 V10.4 M8.2 6.2 V10.4" fill="none" stroke="#676f83" stroke-width="1.3"/></svg>
<div class="a" style="left:241px;top:782px;width:640px;height:48px;border-radius:8px;background:#fff;border:1px solid #eceef2;box-shadow:0 1px 2px rgba(16,24,40,.05)"></div>
<svg style="left:256px;top:797px" width="20" height="18" viewBox="0 0 20 18"><rect width="20" height="18" rx="1.4" fill="#2290ea"/><rect x=".7" y=".7" width="18.6" height="16.6" rx="1" fill="#319bec"/><path d="M2.9 13 V4.9 H4.9 L6.95 7.6 L9 4.9 H11 V13 H9 V8 L6.95 10.6 L4.9 8 V13 Z M14 4.9 H15.9 V9 H18 L14.95 12.5 L11.9 9 H14 Z" fill="#fff"/></svg>
<div class="a t fn" id="fn5" style="left:290.30px;top:789px;height:20px;line-height:20px;"><span class="l" style="width:22.70px"><span style="transform:scaleX(1.1660)">05 </span></span>智能体<span class="l" style="width:25.50px"><span style="transform:scaleX(1.0924)">.md</span></span></div>
<div class="a t fm" id="fm5" style="left:289.50px;top:807px;height:16px;line-height:16px;"><span class="l" style="width:81.20px"><span style="transform:scaleX(1.0318)">MD · 15.05 KB</span></span></div>
<svg style="left:849px;top:799px" width="14" height="14" viewBox="0 0 14 14"><path d="M0.2 3.4 H14 M2.3 3.4 V11.9 Q2.3 12.9 3.3 12.9 H10.9 Q11.9 12.9 11.9 11.9 V3.4 M4.6 3.2 V1.6 Q4.6 0.8 5.4 0.8 H8.6 Q9.4 0.8 9.4 1.6 V3.2 M5.8 6.2 V10.4 M8.2 6.2 V10.4" fill="none" stroke="#676f83" stroke-width="1.3"/></svg>
<div class="a" style="left:241px;top:834px;width:640px;height:48px;border-radius:8px;background:#fff;border:1px solid #eceef2;box-shadow:0 1px 2px rgba(16,24,40,.05)"></div>
<svg style="left:256px;top:849px" width="20" height="18" viewBox="0 0 20 18"><rect width="20" height="18" rx="1.4" fill="#2290ea"/><rect x=".7" y=".7" width="18.6" height="16.6" rx="1" fill="#319bec"/><path d="M2.9 13 V4.9 H4.9 L6.95 7.6 L9 4.9 H11 V13 H9 V8 L6.95 10.6 L4.9 8 V13 Z M14 4.9 H15.9 V9 H18 L14.95 12.5 L11.9 9 H14 Z" fill="#fff"/></svg>
<div class="a t fn" id="fn6" style="left:290.30px;top:841px;height:20px;line-height:20px;"><span class="l" style="width:22.70px"><span style="transform:scaleX(1.1660)">06 </span></span>移动端智能体<span class="l" style="width:25.50px"><span style="transform:scaleX(1.0924)">.md</span></span></div>
<div class="a t fm" id="fm6" style="left:289.50px;top:859px;height:16px;line-height:16px;"><span class="l" style="width:81.20px"><span style="transform:scaleX(1.0318)">MD · 48.59 KB</span></span></div>
<svg style="left:849px;top:851px" width="14" height="14" viewBox="0 0 14 14"><path d="M0.2 3.4 H14 M2.3 3.4 V11.9 Q2.3 12.9 3.3 12.9 H10.9 Q11.9 12.9 11.9 11.9 V3.4 M4.6 3.2 V1.6 Q4.6 0.8 5.4 0.8 H8.6 Q9.4 0.8 9.4 1.6 V3.2 M5.8 6.2 V10.4 M8.2 6.2 V10.4" fill="none" stroke="#676f83" stroke-width="1.3"/></svg>
<div class="a" style="left:241px;top:886px;width:640px;height:48px;border-radius:8px;background:#fff;border:1px solid #eceef2;box-shadow:0 1px 2px rgba(16,24,40,.05)"></div>
<svg style="left:256px;top:901px" width="20" height="18" viewBox="0 0 20 18"><rect width="20" height="18" rx="1.4" fill="#2290ea"/><rect x=".7" y=".7" width="18.6" height="16.6" rx="1" fill="#319bec"/><path d="M2.9 13 V4.9 H4.9 L6.95 7.6 L9 4.9 H11 V13 H9 V8 L6.95 10.6 L4.9 8 V13 Z M14 4.9 H15.9 V9 H18 L14.95 12.5 L11.9 9 H14 Z" fill="#fff"/></svg>
<div class="a t fn" id="fn7" style="left:290.30px;top:893px;height:20px;line-height:20px;"><span class="l" style="width:79.90px"><span style="transform:scaleX(1.0693)">07 Gateway</span></span>开发与多通道通信<span class="l" style="width:25.50px"><span style="transform:scaleX(1.0924)">.md</span></span></div>
<div class="a t fm" id="fm7" style="left:289.50px;top:911px;height:16px;line-height:16px;"><span class="l" style="width:81.20px"><span style="transform:scaleX(1.0318)">MD · 19.20 KB</span></span></div>
<svg style="left:849px;top:903px" width="14" height="14" viewBox="0 0 14 14"><path d="M0.2 3.4 H14 M2.3 3.4 V11.9 Q2.3 12.9 3.3 12.9 H10.9 Q11.9 12.9 11.9 11.9 V3.4 M4.6 3.2 V1.6 Q4.6 0.8 5.4 0.8 H8.6 Q9.4 0.8 9.4 1.6 V3.2 M5.8 6.2 V10.4 M8.2 6.2 V10.4" fill="none" stroke="#676f83" stroke-width="1.3"/></svg>
<div class="a" style="left:241px;top:938px;width:640px;height:48px;border-radius:8px;background:#fff;border:1px solid #eceef2;box-shadow:0 1px 2px rgba(16,24,40,.05)"></div>
<svg style="left:256px;top:953px" width="20" height="18" viewBox="0 0 20 18"><rect width="20" height="18" rx="1.4" fill="#2290ea"/><rect x=".7" y=".7" width="18.6" height="16.6" rx="1" fill="#319bec"/><path d="M2.9 13 V4.9 H4.9 L6.95 7.6 L9 4.9 H11 V13 H9 V8 L6.95 10.6 L4.9 8 V13 Z M14 4.9 H15.9 V9 H18 L14.95 12.5 L11.9 9 H14 Z" fill="#fff"/></svg>
<div class="a t fn" id="fn8" style="left:290.30px;top:945px;height:20px;line-height:20px;"><span class="l" style="width:22.70px"><span style="transform:scaleX(1.1660)">08 </span></span>记忆与检索<span class="l" style="width:25.50px"><span style="transform:scaleX(1.0924)">.md</span></span></div>
<div class="a t fm" id="fm8" style="left:289.50px;top:963px;height:16px;line-height:16px;"><span class="l" style="width:81.20px"><span style="transform:scaleX(1.0318)">MD · 31.13 KB</span></span></div>
<svg style="left:849px;top:955px" width="14" height="14" viewBox="0 0 14 14"><path d="M0.2 3.4 H14 M2.3 3.4 V11.9 Q2.3 12.9 3.3 12.9 H10.9 Q11.9 12.9 11.9 11.9 V3.4 M4.6 3.2 V1.6 Q4.6 0.8 5.4 0.8 H8.6 Q9.4 0.8 9.4 1.6 V3.2 M5.8 6.2 V10.4 M8.2 6.2 V10.4" fill="none" stroke="#676f83" stroke-width="1.3"/></svg>
<div class="a" style="left:772px;top:1006px;width:109px;height:40px;border-radius:8px;background:#155aef"></div>
<div class="a t" id="nx" style="left:798.00px;top:1012px;height:20px;line-height:20px;font-size:13px;color:#fff">下一步</div>
<svg style="left:843px;top:1016px" width="12" height="12" viewBox="0 0 12 12"><path d="M0.8 6 H10.5 M6.2 1.5 L10.7 6 L6.2 10.5" fill="none" stroke="#fff" stroke-width="1.4"/></svg>
<div class="a t" id="rt" style="left:993.00px;top:274px;height:20px;line-height:20px;font-size:14px;font-weight:700;color:#101828">文件预览</div>
<div class="a t" id="rs" style="left:993.30px;top:296px;height:18px;line-height:18px;font-size:12px;color:#6e768a"><span class="l" style="width:20.26px"><span style="transform:scaleX(1.0112)">08_</span></span>记忆与检索<span class="l" style="width:20.24px"><span style="transform:scaleX(1.0112)">.md</span></span></div>
<svg style="left:1872px;top:280px" width="8" height="8" viewBox="0 0 8 8"><path d="M0.3 0.3 L7.7 7.7 M7.7 0.3 L0.3 7.7" stroke="#101828" stroke-width="1.2" fill="none"/></svg>
<div class="a" style="left:993px;top:328px;width:895px;height:1px;background:#f1f2f5"></div>
<div class="a" style="left:1905px;top:329px;width:15px;height:703px;background:#fbfbfb"></div>
<svg style="left:1908px;top:334px" width="9" height="7" viewBox="0 0 9 7"><path d="M4.5 0.3 L8.7 6.2 Q8.8 6.8 8 6.8 H1 Q0.2 6.8 0.3 6.2Z" fill="#8b8b8b"/></svg>
<div class="a" style="left:1908px;top:347px;width:9px;height:219px;border-radius:4.5px;background:#8b8b8b"></div>
<svg style="left:1908px;top:1021px" width="9" height="7" viewBox="0 0 9 7"><path d="M4.5 6.7 L8.7 0.8 Q8.8 0.2 8 0.2 H1 Q0.2 0.2 0.3 0.8Z" fill="#8b8b8b"/></svg>
<div class="a t pl" id="L1" style="left:993.00px;top:409px;height:20px;line-height:20px;"><span class="l" style="width:20.75px"><span style="transform:scaleX(1.0658)">08 </span></span>记忆与检索</div>
<div class="a t pl" id="L2" style="left:993.00px;top:429px;height:20px;line-height:20px;">我们的智能体已经拥有许多能力，例如调用<span class="l" style="width:42.50px"><span style="transform:scaleX(1.0115)"> Tools </span></span>或使用<span class="l" style="width:39.30px"><span style="transform:scaleX(1.0749)"> Skills</span></span>，但它仍然缺少一个关键能力：<span class="l" style="width:12.20px"><span style="transform:scaleX(1.1186)">**</span></span>记忆<span class="l" style="width:12.20px"><span style="transform:scaleX(1.1186)">**</span></span>。如果智能体无法记住先前的交互内</div>
<div class="a t pl" id="L3" style="left:993.00px;top:449px;height:20px;line-height:20px;">容，也无法从历史经验中学习，那么在连续对话或复杂任务中，其表现将受到极大限制。</div>
<div class="a t pl" id="L4" style="left:993.00px;top:469px;height:20px;line-height:20px;">智能体要帮助干好活，就得跟人一样，具备记忆功能，如果一个<span class="l" style="width:40.40px"><span style="transform:scaleX(1.1040)">Agent</span></span>什么记忆能力也没有，刚处理完的事情就忘记了，那智能体肯定就不能</div>
<div class="a t pl" id="L5" style="left:993.00px;top:489px;height:20px;line-height:20px;">办好事情。我们希望智能体就像一个秘书一样，能够逐步学习，具备好记忆。</div>
<div class="a t pl" id="L7" style="left:993.00px;top:529px;height:20px;line-height:20px;">在本章中，我们将介绍<span class="l" style="width:48.90px"><span style="transform:scaleX(1.1020)"> Agent </span></span>的两大核心能力：<span class="l" style="width:12.40px"><span style="transform:scaleX(1.1370)">**</span></span>记忆系统（<span class="l" style="width:108.90px"><span style="transform:scaleX(1.0769)">Memory System</span></span>）与检索增强生成（<span class="l" style="width:246.50px"><span style="transform:scaleX(1.0629)">Retrieval-Augmented Generation, RA</span></span></div>
<div class="a t pl" id="L8" style="left:993.00px;top:549px;height:20px;line-height:20px;"><span class="l">G</span>）<span class="l" style="width:12.20px"><span style="transform:scaleX(1.1186)">**</span></span>。</div>
<div class="a t pl" id="L11" style="left:993.00px;top:609px;height:20px;line-height:20px;">一、记忆系统</div>
<div class="a t pl" id="L12" style="left:993.00px;top:629px;height:20px;line-height:20px;">在构建智能体的记忆系统之前，我们先从认知科学角度理解人类如何处理与存储信息。人类记忆是一个多层级认知系统，不仅能够存储信息，</div>
<div class="a t pl" id="L13" style="left:993.00px;top:649px;height:20px;line-height:20px;">还能根据重要性、时间与上下文对信息进行分类整理。根据认知心理学研究，人类记忆主要分为两大类型：短期记忆和长期记忆。然而，现代</div>
<div class="a t pl" id="L14" style="left:993.00px;top:669px;height:20px;line-height:20px;">研究更倾向于将短期记忆理解为工作记忆，因此认知心理学常以工作记忆框架研究记忆系统。</div>
<div class="a t pl" id="L17" style="left:993.00px;top:729px;height:20px;line-height:20px;"><span class="l">1. </span>工作记忆</div>
<div class="a t pl" id="L18" style="left:993.00px;top:749px;height:20px;line-height:20px;">工作记忆（<span class="l" style="width:117.30px"><span style="transform:scaleX(1.1087)">Working Memory</span></span>）是一种容量有限的认知系统，用于短暂保存处理信息。其更准确的定义是：在存在干扰的情境下，个体仍能暂</div>
<div class="a t pl" id="L19" style="left:993.00px;top:769px;height:20px;line-height:20px;">时保持并处理信息，以支持各种日常认知活动。<span class="l" style="width:38.00px"><span style="transform:scaleX(1.0843)">1956 </span></span>年，米勒最早对短期记忆能力进行定量研究，提出<span class="l" style="width:16.60px"><span style="transform:scaleX(1.0667)">“**</span></span>神奇的数字：<span class="l" style="width:45.00px"><span style="transform:scaleX(1.1590)">7±2**”</span></span>。他观察到，</div>
<div class="a t pl" id="L20" style="left:993.00px;top:789px;height:20px;line-height:20px;">年轻人的记忆广度大约为<span class="l" style="width:18.80px"><span style="transform:scaleX(1.2068)"> 7 </span></span>个单位（阿拉伯数字、字母、单词或其他单位）。后续研究发现，这一<span class="l" style="width:26.30px"><span style="transform:scaleX(1.1304)">7±2</span></span>容量并非单指短期记忆，而是工作记忆</div>
<div class="a t pl" id="L21" style="left:993.00px;top:809px;height:20px;line-height:20px;">与长期记忆共同作用的结果。打个比方，假设有<span class="l" style="width:8.30px"><span style="transform:scaleX(1.0645)">6</span></span>个字母<span class="l" style="width:84.70px"><span style="transform:scaleX(0.9552)">“C,A,T,D,O,G”</span></span>，如果没有长期记忆参与，那么工作记忆中只能记住<span class="l" style="width:8.30px"><span style="transform:scaleX(1.0645)">6</span></span>个单独的字母，但</div>
<div class="a t pl" id="L22" style="left:993.00px;top:829px;height:20px;line-height:20px;">是长期记忆告诉你这构成了两个单词，所以变成<span class="l" style="width:36.00px"><span style="transform:scaleX(0.9644)">“CAT”</span></span>和<span class="l" style="width:45.50px"><span style="transform:scaleX(1.1039)">“DOG“</span></span>只占两个单位的记忆容量了。</div>
<div class="a t pl" id="L24" style="left:993.00px;top:869px;height:20px;line-height:20px;"><span class="l" style="width:59.00px"><span style="transform:scaleX(0.9717)">[Req ???]</span></span></div>
<div class="a t pl" id="L26" style="left:993.00px;top:909px;height:20px;line-height:20px;">这是什么意思呢？感觉挺有意思，不过好像又没解释清楚。另外一半都是分为短期记忆和长期记忆，这个分法为什么还不一样。</div>
<div class="a t pl" id="L28" style="left:993.00px;top:949px;height:20px;line-height:20px;"><span class="l" style="width:35.00px"><span style="transform:scaleX(1.0458)">[Rep]</span></span></div>
<div class="a t pl" id="L30" style="left:993.00px;top:989px;height:20px;line-height:20px;">确实没写清楚，其实大家通常还是把短期记忆和工作记忆同义使用的。目前认为，短期记忆只是个<span class="l" style="width:12.20px"><span style="transform:scaleX(1.1186)">**</span></span>暂存信息<span class="l" style="width:12.20px"><span style="transform:scaleX(1.1186)">**</span></span>的<span class="l" style="width:6.30px"><span style="transform:scaleX(1.3485)">“</span></span>中转站<span class="l" style="width:5.80px"><span style="transform:scaleX(1.2415)">”</span></span>；现在认为它也是加</div>
<div class="a t pl" id="L31" style="left:993.00px;top:1009px;height:20px;line-height:20px;">工中心，<span class="l" style="width:12.20px"><span style="transform:scaleX(1.1186)">**</span></span>不仅存东西还处理东西<span class="l" style="width:12.20px"><span style="transform:scaleX(1.1186)">**</span></span>，所以现在谈论认知能力主要统称为<span class="l" style="width:6.30px"><span style="transform:scaleX(1.3485)">“</span></span>工作记忆<span class="l" style="width:5.80px"><span style="transform:scaleX(1.2415)">”</span></span>这个概念。</div>
<div class="a" style="left:1880px;top:966px;width:60px;height:36px;border-radius:18px;background:#fff;box-shadow:0 4px 24px 8px rgba(0,0,0,.07)"></div>
<svg style="left:1891px;top:975px" width="19" height="18" viewBox="0 0 19 18"><defs><linearGradient id="br" gradientUnits="userSpaceOnUse" x1="0" y1="3" x2="19" y2="15"><stop offset="0" stop-color="#fb5a8a"/><stop offset=".18" stop-color="#f03cc4"/><stop offset=".55" stop-color="#9a4cf2"/><stop offset="1" stop-color="#3580f6"/></linearGradient><radialGradient id="br2" gradientUnits="userSpaceOnUse" cx="3" cy="2" r="5"><stop offset="0" stop-color="#ff8a3d"/><stop offset="1" stop-color="#ff8a3d" stop-opacity="0"/></radialGradient></defs><g><path id="bl1" d="M8.8 1 C7 -0.4 4.4 0.6 4 2.6 C2 2.8 1 5 2 6.6 C0.2 7.6 0 10.4 1.6 11.6 C1.2 13.8 3 15.6 5 15.2 C5.8 17.4 8 17.8 8.8 17 Z" fill="url(#br)"/><path d="M10.2 1 C12 -0.4 14.6 0.6 15 2.6 C17 2.8 18 5 17 6.6 C18.8 7.6 19 10.4 17.4 11.6 C17.8 13.8 16 15.6 14 15.2 C13.2 17.4 11 17.8 10.2 17 Z" fill="url(#br)"/><path d="M8.8 1 C7 -0.4 4.4 0.6 4 2.6 C2 2.8 1 5 2 6.6 C0.2 7.6 0 10.4 1.6 11.6 L8.8 9Z" fill="url(#br2)"/><path d="M3.2 9 H8.6 M8.6 5 H6.4 Q4.8 5 4.6 3.6 M8.6 13 H6.6 Q5 13 4.6 12" fill="none" stroke="#fff" stroke-width=".8" opacity=".85"/><path d="M10.4 4.2 L12.4 5.6 L13.8 4.4 M12.4 5.6 V7 M10.4 9.6 L13.2 8.2 L15.4 9 M13.2 8.2 V6.6 M10.4 13.6 L12.6 12.4 L14.4 13.2" fill="none" stroke="#fff" stroke-width=".8" opacity=".85"/></g></svg>
</body></html>
